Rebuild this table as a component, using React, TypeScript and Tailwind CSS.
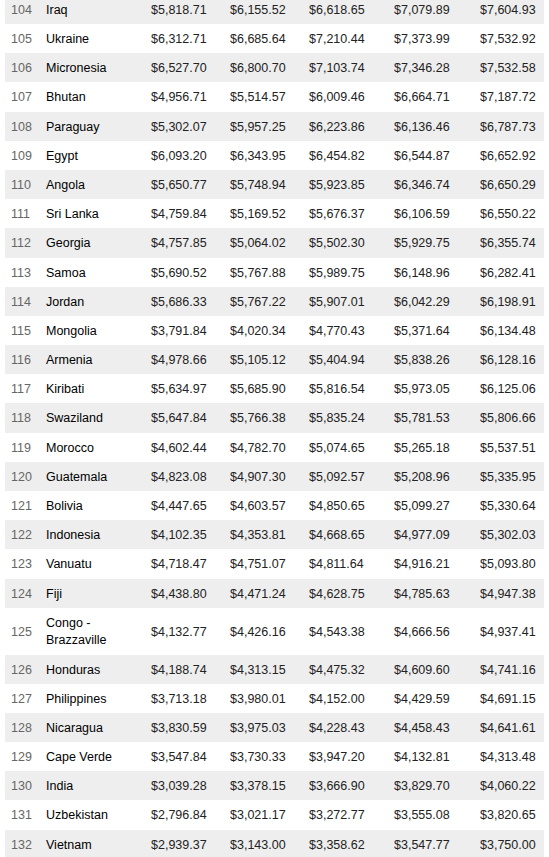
const rows: [number, string, string, string, string, string, string][] = [
  [104, "Iraq", "$5,818.71", "$6,155.52", "$6,618.65", "$7,079.89", "$7,604.93"],
  [105, "Ukraine", "$6,312.71", "$6,685.64", "$7,210.44", "$7,373.99", "$7,532.92"],
  [106, "Micronesia", "$6,527.70", "$6,800.70", "$7,103.74", "$7,346.28", "$7,532.58"],
  [107, "Bhutan", "$4,956.71", "$5,514.57", "$6,009.46", "$6,664.71", "$7,187.72"],
  [108, "Paraguay", "$5,302.07", "$5,957.25", "$6,223.86", "$6,136.46", "$6,787.73"],
  [109, "Egypt", "$6,093.20", "$6,343.95", "$6,454.82", "$6,544.87", "$6,652.92"],
  [110, "Angola", "$5,650.77", "$5,748.94", "$5,923.85", "$6,346.74", "$6,650.29"],
  [111, "Sri Lanka", "$4,759.84", "$5,169.52", "$5,676.37", "$6,106.59", "$6,550.22"],
  [112, "Georgia", "$4,757.85", "$5,064.02", "$5,502.30", "$5,929.75", "$6,355.74"],
  [113, "Samoa", "$5,690.52", "$5,767.88", "$5,989.75", "$6,148.96", "$6,282.41"],
  [114, "Jordan", "$5,686.33", "$5,767.22", "$5,907.01", "$6,042.29", "$6,198.91"],
  [115, "Mongolia", "$3,791.84", "$4,020.34", "$4,770.43", "$5,371.64", "$6,134.48"],
  [116, "Armenia", "$4,978.66", "$5,105.12", "$5,404.94", "$5,838.26", "$6,128.16"],
  [117, "Kiribati", "$5,634.97", "$5,685.90", "$5,816.54", "$5,973.05", "$6,125.06"],
  [118, "Swaziland", "$5,647.84", "$5,766.38", "$5,835.24", "$5,781.53", "$5,806.66"],
  [119, "Morocco", "$4,602.44", "$4,782.70", "$5,074.65", "$5,265.18", "$5,537.51"],
  [120, "Guatemala", "$4,823.08", "$4,907.30", "$5,092.57", "$5,208.96", "$5,335.95"],
  [121, "Bolivia", "$4,447.65", "$4,603.57", "$4,850.65", "$5,099.27", "$5,330.64"],
  [122, "Indonesia", "$4,102.35", "$4,353.81", "$4,668.65", "$4,977.09", "$5,302.03"],
  [123, "Vanuatu", "$4,718.47", "$4,751.07", "$4,811.64", "$4,916.21", "$5,093.80"],
  [124, "Fiji", "$4,438.80", "$4,471.24", "$4,628.75", "$4,785.63", "$4,947.38"],
  [125, "Congo - Brazzaville", "$4,132.77", "$4,426.16", "$4,543.38", "$4,666.56", "$4,937.41"],
  [126, "Honduras", "$4,188.74", "$4,313.15", "$4,475.32", "$4,609.60", "$4,741.16"],
  [127, "Philippines", "$3,713.18", "$3,980.01", "$4,152.00", "$4,429.59", "$4,691.15"],
  [128, "Nicaragua", "$3,830.59", "$3,975.03", "$4,228.43", "$4,458.43", "$4,641.61"],
  [129, "Cape Verde", "$3,547.84", "$3,730.33", "$3,947.20", "$4,132.81", "$4,313.48"],
  [130, "India", "$3,039.28", "$3,378.15", "$3,666.90", "$3,829.70", "$4,060.22"],
  [131, "Uzbekistan", "$2,796.84", "$3,021.17", "$3,272.77", "$3,555.08", "$3,820.65"],
  [132, "Vietnam", "$2,939.37", "$3,143.00", "$3,358.62", "$3,547.77", "$3,750.00"],
];

export default function App() {
  return (
    <div className="bg-white min-h-screen overflow-hidden pl-[5px]">
      <table
        className="w-[539px] table-fixed border-collapse mt-[-5.2px] text-[12.5px] leading-[17.6px] text-[#222]"
        style={{ fontFamily: "'Liberation Sans', Arial, sans-serif" }}
      >
        <colgroup>
          <col className="w-[35px]" />
          <col className="w-[105px]" />
          <col className="w-[79px]" />
          <col className="w-[79px]" />
          <col className="w-[85px]" />
          <col className="w-[86px]" />
          <col className="w-[70px]" />
        </colgroup>
        <tbody>
          {rows.map((r, i) => (
            <tr key={r[0]} className={i % 2 === 0 ? "bg-[#eeeeee]" : "bg-white"}>
              <td className="pl-[6px] pt-[7px] pb-[4.6px] text-[#666]">{r[0]}</td>
              <td className="pl-[6px] pr-[2px] pt-[7px] pb-[4.6px] text-black">{r[1]}</td>
              {r.slice(2).map((v, j) => (
                <td key={j} className="pl-[6px] pt-[7px] pb-[4.6px] whitespace-nowrap">
                  {v}
                </td>
              ))}
            </tr>
          ))}
        </tbody>
      </table>
    </div>
  );
}
